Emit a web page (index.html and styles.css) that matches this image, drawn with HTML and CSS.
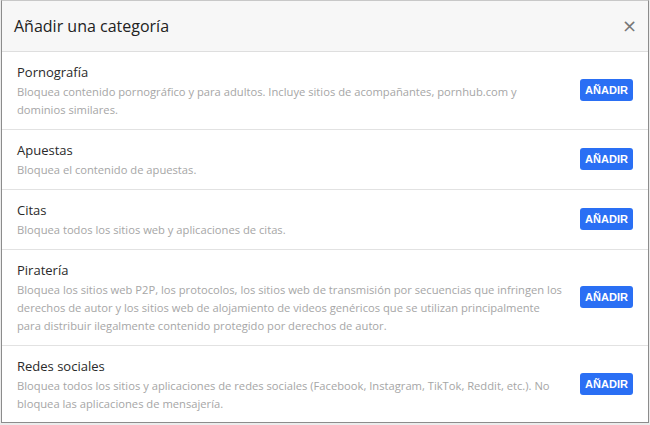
FILE: index.html
```html
<!DOCTYPE html>
<html lang="es">
<head>
    <meta charset="UTF-8">
    <meta name="viewport" content="width=device-width, initial-scale=1.0">
    <title>Añadir una categoría</title>
    <link rel="stylesheet" href="styles.css">
</head>
<body>
    <div class="modal">
        <div class="modal-header">
            <h2>Añadir una categoría</h2>
            <button class="close" aria-label="Cerrar">&times;</button>
        </div>

        <div class="category-list">
            <div class="category">
                <div class="category-text">
                    <h3>Pornografía</h3>
                    <p>Bloquea contenido pornográfico y para adultos. Incluye sitios de acompañantes, pornhub.com y dominios similares.</p>
                </div>
                <button class="btn-add">Añadir</button>
            </div>
            <div class="category">
                <div class="category-text">
                    <h3>Apuestas</h3>
                    <p>Bloquea el contenido de apuestas.</p>
                </div>
                <button class="btn-add">Añadir</button>
            </div>
            <div class="category">
                <div class="category-text">
                    <h3>Citas</h3>
                    <p>Bloquea todos los sitios web y aplicaciones de citas.</p>
                </div>
                <button class="btn-add">Añadir</button>
            </div>
            <div class="category">
                <div class="category-text">
                    <h3>Piratería</h3>
                    <p>Bloquea los sitios web P2P, los protocolos, los sitios web de transmisión por secuencias que infringen los derechos de autor y los sitios web de alojamiento de videos genéricos que se utilizan principalmente para distribuir ilegalmente contenido protegido por derechos de autor.</p>
                </div>
                <button class="btn-add">Añadir</button>
            </div>
            <div class="category">
                <div class="category-text">
                    <h3>Redes sociales</h3>
                    <p>Bloquea todos los sitios y aplicaciones de redes sociales (Facebook, Instagram, TikTok, Reddit, etc.). No bloquea las aplicaciones de mensajería.</p>
                </div>
                <button class="btn-add">Añadir</button>
            </div>
        </div>
    </div>
</body>
</html>
```

FILE: styles.css
```css
* {
    margin: 0;
    padding: 0;
    box-sizing: border-box;
}

body {
    font-family: 'Open Sans', 'Noto Sans', sans-serif;
    background: #ececec;
    width: 650px;
    height: 425px;
    overflow: hidden;
}

.modal {
    margin-left: 1px;
    width: 648px;
    height: 423px;
    background: #fff;
    border: 1px solid #8c8c8c;
    border-top-color: #c8c8c8;
    overflow: hidden;
}

.modal-header {
    height: 51px;
    background: #f7f7f7;
    border-bottom: 1px solid #dedede;
    display: flex;
    align-items: center;
    justify-content: space-between;
    padding: 0 11px 0 12px;
}

.modal-header h2 {
    font-size: 16px;
    font-weight: 400;
    color: #222;
}

.close {
    background: none;
    border: none;
    font-family: 'DejaVu Sans', sans-serif;
    font-size: 18px;
    line-height: 1;
    color: #777;
    cursor: pointer;
}

.category {
    display: flex;
    align-items: center;
    gap: 17px;
    padding: 9px 15px 10px 15px;
    border-bottom: 1px solid #e2e2e2;
}

.category-text {
    flex: 1;
}

.category h3 {
    font-size: 13px;
    font-weight: 400;
    line-height: 22px;
    color: #2a2a2a;
}

.category p {
    font-size: 11.2px;
    line-height: 18px;
    color: #a6a6a6;
}

.btn-add {
    flex-shrink: 0;
    width: 53px;
    height: 22px;
    background: #2a6ff4;
    color: #fff;
    border: none;
    border-radius: 3px;
    font-family: 'Liberation Sans', Arial, sans-serif;
    font-size: 11px;
    font-weight: 700;
    text-transform: uppercase;
    cursor: pointer;
}
```
